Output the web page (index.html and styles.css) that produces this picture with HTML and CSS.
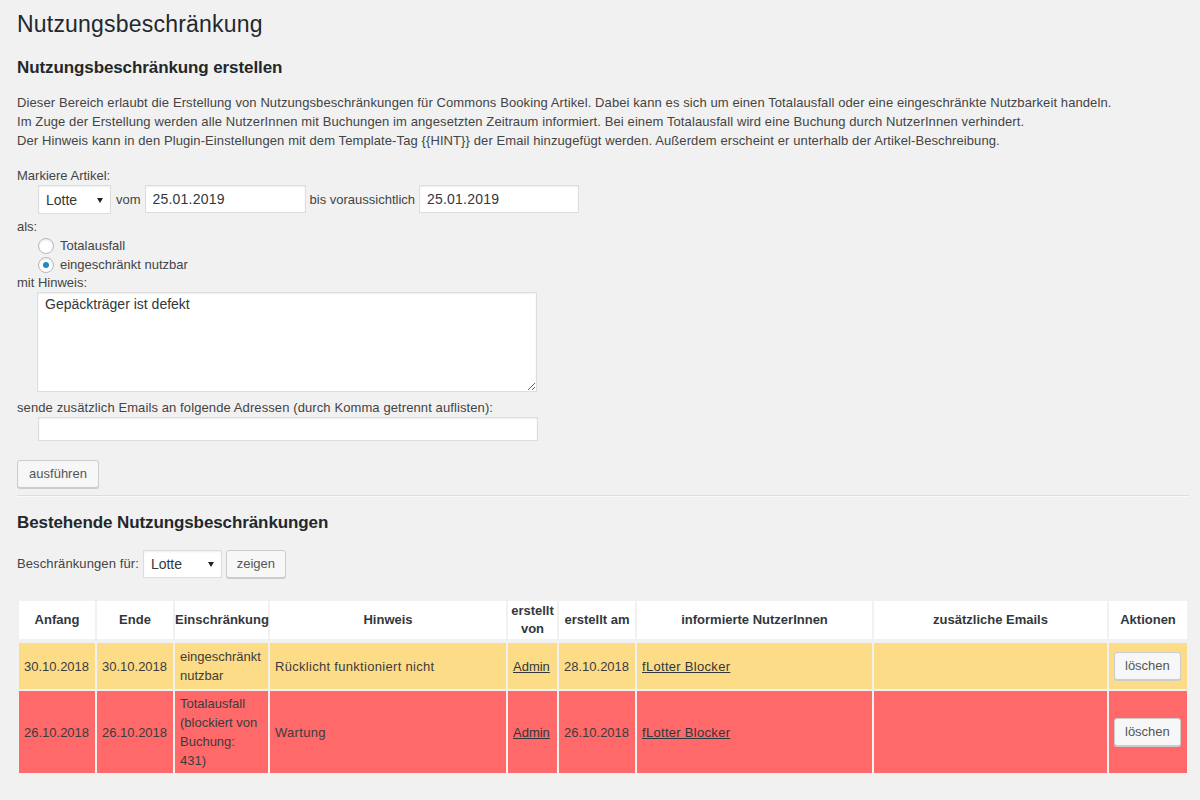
FILE: index.html
```html
<!DOCTYPE html>
<html lang="de">
<head>
<meta charset="utf-8">
<title>Nutzungsbeschränkung</title>
<link rel="stylesheet" href="styles.css">
</head>
<body>
<div class="wrap">
  <h1 class="page-title">Nutzungsbeschränkung</h1>

  <h2 class="section-title first">Nutzungsbeschränkung erstellen</h2>
  <p class="intro">Dieser Bereich erlaubt die Erstellung von Nutzungsbeschränkungen für Commons Booking Artikel. Dabei kann es sich um einen Totalausfall oder eine eingeschränkte Nutzbarkeit handeln.<br>Im Zuge der Erstellung werden alle NutzerInnen mit Buchungen im angesetzten Zeitraum informiert. Bei einem Totalausfall wird eine Buchung durch NutzerInnen verhindert.<br>Der Hinweis kann in den Plugin-Einstellungen mit dem Template-Tag {{HINT}} der Email hinzugefügt werden. Außerdem erscheint er unterhalb der Artikel-Beschreibung.</p>

  <form class="create-form">
    <div class="field-label label-item">Markiere Artikel:</div>
    <div class="item-row">
      <span class="select select-item"><select><option>Lotte</option></select></span>
      <span class="row-text text-vom">vom</span>
      <input class="text-input date-input" type="text" value="25.01.2019">
      <span class="row-text">bis voraussichtlich</span>
      <input class="text-input date-input" type="text" value="25.01.2019">
    </div>

    <div class="field-label label-als">als:</div>
    <label class="radio-row"><input class="radio" type="radio" name="typ"><span>Totalausfall</span></label>
    <label class="radio-row"><input class="radio" type="radio" name="typ" checked><span>eingeschränkt nutzbar</span></label>

    <div class="field-label label-hint">mit Hinweis:</div>
    <textarea class="hint-area">Gepäckträger ist defekt</textarea>

    <div class="field-label label-mail">sende zusätzlich Emails an folgende Adressen (durch Komma getrennt auflisten):</div>
    <input class="text-input mail-input" type="text">

    <div class="submit-row"><button type="button" class="button">ausführen</button></div>
  </form>

  <hr class="divider">

  <h2 class="section-title second">Bestehende Nutzungsbeschränkungen</h2>
  <div class="filter-row">
    <span class="row-text filter-label">Beschränkungen für:</span>
    <span class="select select-filter"><select><option>Lotte</option></select></span>
    <button type="button" class="button">zeigen</button>
  </div>

  <table class="restrictions">
    <colgroup>
      <col class="c-date">
      <col class="c-date">
      <col class="c-type">
      <col class="c-hint">
      <col class="c-by">
      <col class="c-date">
      <col class="c-users">
      <col class="c-mails">
      <col class="c-actions">
    </colgroup>
    <thead>
      <tr>
        <th>Anfang</th>
        <th>Ende</th>
        <th>Einschränkung</th>
        <th>Hinweis</th>
        <th>erstellt von</th>
        <th>erstellt am</th>
        <th>informierte NutzerInnen</th>
        <th>zusätzliche Emails</th>
        <th>Aktionen</th>
      </tr>
    </thead>
    <tbody>
      <tr class="row-limited">
        <td>30.10.2018</td>
        <td>30.10.2018</td>
        <td>eingeschränkt nutzbar</td>
        <td class="wide">Rücklicht funktioniert nicht</td>
        <td><a href="#">Admin</a></td>
        <td>28.10.2018</td>
        <td class="wide"><a href="#">fLotter Blocker</a></td>
        <td></td>
        <td><button type="button" class="button">löschen</button></td>
      </tr>
      <tr class="row-total">
        <td>26.10.2018</td>
        <td>26.10.2018</td>
        <td>Totalausfall (blockiert von Buchung: 431)</td>
        <td class="wide">Wartung</td>
        <td><a href="#">Admin</a></td>
        <td>26.10.2018</td>
        <td class="wide"><a href="#">fLotter Blocker</a></td>
        <td></td>
        <td><button type="button" class="button">löschen</button></td>
      </tr>
    </tbody>
  </table>
</div>
</body>
</html>
```

FILE: styles.css
```css
* { box-sizing: border-box; }

body {
  margin: 0;
  background: #f1f1f1;
  font-family: "Liberation Sans", Arial, sans-serif;
  font-size: 13px;
  line-height: 19px;
  color: #444;
}

.wrap {
  padding: 0 11px 40px 17px;
}

.page-title {
  margin: 0;
  padding-top: 10px;
  font-size: 23px;
  font-weight: 400;
  line-height: 29px;
  letter-spacing: 0.2px;
  color: #23282d;
}

.section-title {
  margin: 18px 0 0;
  font-size: 17px;
  line-height: 22px;
  font-weight: 700;
  letter-spacing: -0.1px;
  color: #23282d;
}

.section-title.second {
  margin-top: 15px;
}

.intro {
  margin: 14px 0 0;
  line-height: 19px;
  letter-spacing: 0.1px;
}

.create-form {
  margin: 0;
}

.field-label {
  line-height: 19px;
}

.label-item { margin-top: 16px; }
.label-als { margin-top: 3px; }
.label-hint { line-height: 18px; }
.label-mail { margin-top: 6px; letter-spacing: 0.1px; }

.item-row {
  display: flex;
  align-items: center;
  gap: 4px;
  height: 29px;
  margin-left: 21px;
}

.text-vom { margin-left: 1px; }

.row-text {
  white-space: nowrap;
}

.filter-label {
  letter-spacing: 0.1px;
}

.select {
  position: relative;
  display: inline-block;
}

.select select {
  appearance: none;
  -webkit-appearance: none;
  display: block;
  height: 28px;
  margin: 0;
  padding: 0 20px 0 7px;
  border: 1px solid #ddd;
  border-radius: 0;
  background: #fff;
  box-shadow: inset 0 1px 2px rgba(0, 0, 0, 0.07);
  font-family: inherit;
  font-size: 14px;
  color: #32373c;
  outline: none;
}

.select::after {
  content: "";
  position: absolute;
  right: 8px;
  top: 50%;
  margin-top: -2px;
  border-left: 3px solid transparent;
  border-right: 3px solid transparent;
  border-top: 5px solid #222;
  pointer-events: none;
}

.select-item select { width: 73px; height: 29px; }
.select-filter select { width: 79px; }

.text-input {
  display: block;
  margin: 0;
  padding: 0 7px;
  border: 1px solid #ddd;
  background: #fff;
  box-shadow: inset 0 1px 2px rgba(0, 0, 0, 0.07);
  font-family: inherit;
  font-size: 14px;
  letter-spacing: 0.2px;
  color: #32373c;
  outline: none;
}

.date-input {
  height: 28px;
  width: 161px;
  align-self: flex-start;
}

.date-input:last-child { width: 160px; }

.radio-row {
  display: flex;
  align-items: center;
  height: 19px;
  margin-left: 21px;
  gap: 6px;
}

.radio {
  appearance: none;
  -webkit-appearance: none;
  position: relative;
  width: 16px;
  height: 16px;
  margin: 0;
  border: 1px solid #b4b9be;
  border-radius: 50%;
  background: #fff;
  box-shadow: inset 0 1px 2px rgba(0, 0, 0, 0.1);
  flex: none;
}

.radio:checked::before {
  content: "";
  position: absolute;
  left: 4px;
  top: 4px;
  width: 6px;
  height: 6px;
  border-radius: 50%;
  background: #1e8cbe;
}

.hint-area {
  display: block;
  width: 500px;
  height: 100px;
  margin: 0 0 0 20px;
  padding: 2px 7px;
  border: 1px solid #ddd;
  background: #fff;
  box-shadow: inset 0 1px 2px rgba(0, 0, 0, 0.07);
  font-family: inherit;
  font-size: 14px;
  line-height: 19px;
  color: #32373c;
  outline: none;
}

.mail-input {
  width: 500px;
  height: 24px;
  margin-left: 21px;
}

.submit-row {
  margin-top: 19px;
  height: 28px;
}

.button {
  display: inline-block;
  height: 28px;
  margin: 0;
  padding: 0 10px 1px;
  border: 1px solid #ccc;
  border-radius: 3px;
  background: #f7f7f7;
  box-shadow: 0 1px 0 #ccc;
  font-family: inherit;
  font-size: 13px;
  line-height: 26px;
  color: #555;
  white-space: nowrap;
  cursor: pointer;
}

.submit-row .button { width: 82px; }
.filter-row .button { width: 60px; padding: 0; text-align: center; }

.divider {
  margin: 7px 0 0;
  height: 0;
  border: 0;
  border-top: 1px solid #ddd;
  border-bottom: 1px solid #fafafa;
}

.filter-row {
  display: flex;
  align-items: center;
  gap: 4px;
  height: 29px;
  margin-top: 15px;
}

.restrictions {
  width: 100%;
  margin-top: 21px;
  table-layout: fixed;
  border-collapse: separate;
  border-spacing: 2px;
}

.c-date { width: 76px; }
.c-type { width: 93px; }
.c-hint { width: 236px; }
.c-by { width: 49px; }
.c-users { width: 235px; }
.c-mails { width: 233px; }
.c-actions { width: 78px; }

.restrictions thead tr { height: 40px; }

.restrictions th {
  padding: 0;
  background: #fff;
  border-bottom: 2px solid #f1f1f1;
  font-size: 13px;
  line-height: 18px;
  font-weight: 700;
  color: #32373c;
  text-align: center;
  vertical-align: middle;
}

.restrictions td {
  padding: 3px 5px;
  line-height: 19px;
  text-align: left;
  vertical-align: middle;
  color: #3c3c3c;
}

.restrictions td.wide {
  letter-spacing: 0.3px;
}

.restrictions td a {
  color: #32373c;
  text-decoration: underline;
}

.row-limited { height: 46px; }
.row-limited td { background: #fcdc87; }
.row-total td { background: #ff6969; }
```
